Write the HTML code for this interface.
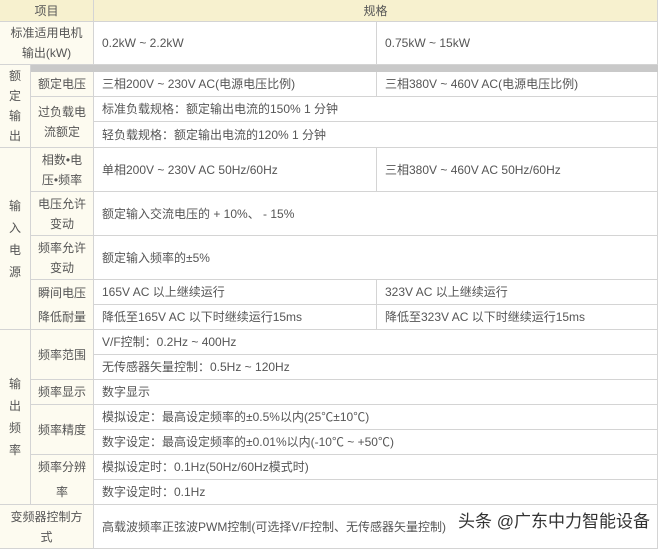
<!DOCTYPE html>
<html><head><meta charset="utf-8"><style>
*{margin:0;padding:0;box-sizing:border-box}
body{width:660px;height:547px;background:#fff;overflow:hidden;position:relative;font-family:"Liberation Sans","Noto Sans CJK SC",sans-serif;font-size:12px;color:#555}
.c{position:absolute;border-right:1px solid #d4d4d4;border-bottom:1px solid #d4d4d4;display:flex;align-items:center;line-height:22px;white-space:nowrap}
.l{background:#fdfbf0;justify-content:center;text-align:center;white-space:normal}
.v{padding-left:8px}
.h{background:#f7f1cf;justify-content:center}
</style></head><body>
<div class="c h" style="left:0;top:0;width:94px;height:22px">项目</div>
<div class="c h" style="left:94px;top:0;width:564px;height:22px">规格</div>

<div class="c l" style="left:0;top:22px;width:94px;height:43px;line-height:20px">标准适用电机<br>输出(kW)</div>
<div class="c v" style="left:94px;top:22px;width:283px;height:43px">0.2kW ~ 2.2kW</div>
<div class="c v" style="left:377px;top:22px;width:281px;height:43px">0.75kW ~ 15kW</div>

<div style="position:absolute;left:30px;top:65px;width:628px;height:7px;background:#c9c9c9"></div>

<div class="c l" style="left:0;top:65px;width:31px;height:83px;line-height:20px">额<br>定<br>输<br>出</div>
<div class="c l" style="left:31px;top:72px;width:63px;height:25px">额定电压</div>
<div class="c v" style="left:94px;top:72px;width:283px;height:25px">三相200V ~ 230V AC(电源电压比例)</div>
<div class="c v" style="left:377px;top:72px;width:281px;height:25px">三相380V ~ 460V AC(电源电压比例)</div>
<div class="c l" style="left:31px;top:97px;width:63px;height:51px;line-height:20px">过负载电<br>流额定</div>
<div class="c v" style="left:94px;top:97px;width:564px;height:25px">标准负载规格：额定输出电流的150% 1 分钟</div>
<div class="c v" style="left:94px;top:122px;width:564px;height:26px">轻负载规格：额定输出电流的120% 1 分钟</div>

<div class="c l" style="left:0;top:148px;width:31px;height:182px;line-height:22px">输<br>入<br>电<br>源</div>
<div class="c l" style="left:31px;top:148px;width:63px;height:44px;line-height:20px">相数•电<br>压•频率</div>
<div class="c v" style="left:94px;top:148px;width:283px;height:44px">单相200V ~ 230V AC 50Hz/60Hz</div>
<div class="c v" style="left:377px;top:148px;width:281px;height:44px">三相380V ~ 460V AC 50Hz/60Hz</div>
<div class="c l" style="left:31px;top:192px;width:63px;height:44px;line-height:20px">电压允许<br>变动</div>
<div class="c v" style="left:94px;top:192px;width:564px;height:44px">额定输入交流电压的 + 10%、 - 15%</div>
<div class="c l" style="left:31px;top:236px;width:63px;height:44px;line-height:20px">频率允许<br>变动</div>
<div class="c v" style="left:94px;top:236px;width:564px;height:44px">额定输入频率的±5%</div>
<div class="c l" style="left:31px;top:280px;width:63px;height:50px;line-height:24px">瞬间电压<br>降低耐量</div>
<div class="c v" style="left:94px;top:280px;width:283px;height:25px">165V AC 以上继续运行</div>
<div class="c v" style="left:377px;top:280px;width:281px;height:25px">323V AC 以上继续运行</div>
<div class="c v" style="left:94px;top:305px;width:283px;height:25px">降低至165V AC 以下时继续运行15ms</div>
<div class="c v" style="left:377px;top:305px;width:281px;height:25px">降低至323V AC 以下时继续运行15ms</div>

<div class="c l" style="left:0;top:330px;width:31px;height:175px;line-height:22px">输<br>出<br>频<br>率</div>
<div class="c l" style="left:31px;top:330px;width:63px;height:50px">频率范围</div>
<div class="c v" style="left:94px;top:330px;width:564px;height:25px">V/F控制：0.2Hz ~ 400Hz</div>
<div class="c v" style="left:94px;top:355px;width:564px;height:25px">无传感器矢量控制：0.5Hz ~ 120Hz</div>
<div class="c l" style="left:31px;top:380px;width:63px;height:25px">频率显示</div>
<div class="c v" style="left:94px;top:380px;width:564px;height:25px">数字显示</div>
<div class="c l" style="left:31px;top:405px;width:63px;height:50px">频率精度</div>
<div class="c v" style="left:94px;top:405px;width:564px;height:25px">模拟设定：最高设定频率的±0.5%以内(25℃±10℃)</div>
<div class="c v" style="left:94px;top:430px;width:564px;height:25px">数字设定：最高设定频率的±0.01%以内(-10℃ ~ +50℃)</div>
<div class="c l" style="left:31px;top:455px;width:63px;height:50px;line-height:25px">频率分辨<br>率</div>
<div class="c v" style="left:94px;top:455px;width:564px;height:25px">模拟设定时：0.1Hz(50Hz/60Hz模式时)</div>
<div class="c v" style="left:94px;top:480px;width:564px;height:25px">数字设定时：0.1Hz</div>

<div class="c l" style="left:0;top:505px;width:94px;height:44px;line-height:20px">变频器控制方<br>式</div>
<div class="c v" style="left:94px;top:505px;width:564px;height:44px">高载波频率正弦波PWM控制(可选择V/F控制、无传感器矢量控制)</div>
<div style="position:absolute;left:458px;top:511px;font-size:17px;color:#333;white-space:nowrap;line-height:22px">头条 @广东中力智能设备</div>
</body></html>
